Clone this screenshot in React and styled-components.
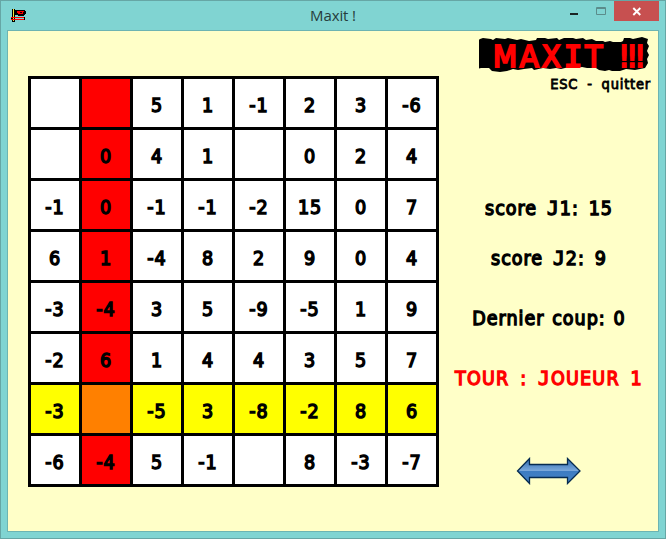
import React from "react";
import styled, { createGlobalStyle } from "styled-components";

const GlobalStyle = createGlobalStyle`
  * { box-sizing: border-box; }
  body { margin: 0; overflow: hidden; }
`;

const Window = styled.div`
  width: 666px;
  height: 539px;
  display: flex;
  flex-direction: column;
  background: #80d4d2;
  border: 1px solid #66a6a5;
  padding: 0 6px 6px;
`;

const TitleBar = styled.header`
  height: 29px;
  flex: none;
  display: grid;
  grid-template-columns: 100px 1fr 100px;
  align-items: start;
`;

const AppIcon = styled.svg`
  margin: 8px 0 0 4px;
  display: block;
`;

const Title = styled.h1`
  margin: 3px 0 0;
  text-align: center;
  font: 400 15px/22px "Open Sans", "Noto Sans", sans-serif;
  letter-spacing: -0.1px;
  color: #263c3c;
`;

const WindowButtons = styled.div`
  display: flex;
  justify-content: flex-end;
`;

const WindowButton = styled.button`
  width: ${(p) => p.$width}px;
  height: 20px;
  padding: 0;
  border: 0;
  display: block;
  background: ${(p) => p.$bg || "transparent"};
  svg { display: block; }
`;

const Client = styled.main`
  flex: 1;
  display: flex;
  background: #ffffc8;
  border: 1px solid #6db4b2;
`;

const Board = styled.div`
  margin: 45px 0 0 20px;
  width: 411px;
  height: 411px;
  flex: none;
  display: grid;
  grid-template-columns: repeat(8, 48px);
  grid-template-rows: repeat(8, 48px);
  gap: 3px;
  padding: 3px;
  background: #000;
`;

const comic = `"DejaVu Sans Condensed", "DejaVu Sans", sans-serif`;

const Cell = styled.div`
  display: flex;
  align-items: center;
  justify-content: center;
  padding-top: 5px;
  background: ${(p) => p.$bg};
  font: 400 19.5px/24px ${comic};
  font-stretch: condensed;
  letter-spacing: 0.9px;
  color: #000;
  -webkit-text-stroke: 1.4px #000;
`;

const Side = styled.aside`
  width: 204px;
  margin-left: 8px;
  display: flex;
  flex-direction: column;
  align-items: center;
`;

const Logo = styled.div`
  display: grid;
  align-self: flex-end;
  width: 172px;
  height: 36px;
  margin-top: 5px;
  > * { grid-area: 1 / 1; }
`;

const Slab = styled.span`
  font-family: "DejaVu Sans Mono", monospace;
  font-stretch: normal;
`;

const LogoText = styled.h2`
  margin: 1px 0 0 14px;
  height: 33px;
  font: 400 31px/38px ${comic};
  font-stretch: condensed;
  letter-spacing: 2.8px;
  white-space: nowrap;
  color: #f00;
  -webkit-text-stroke: 2px #f00;
`;

const Bangs = styled.span`
  margin-left: 2px;
  letter-spacing: -3.2px;
`;

const Line = styled.p`
  margin: ${(p) => p.$top}px 0 0;
  align-self: ${(p) => p.$align || "center"};
  font: 400 ${(p) => p.$size || 19.5}px/24px ${comic};
  font-stretch: condensed;
  letter-spacing: ${(p) => p.$ls || 0}px;
  word-spacing: ${(p) => p.$ws || 0}px;
  white-space: nowrap;
  color: ${(p) => p.$color || "#000"};
  -webkit-text-stroke: ${(p) => p.$stroke || 1.3}px ${(p) => p.$color || "#000"};
`;

const Arrow = styled.svg`
  display: block;
  margin-top: 66px;
`;

const rows = [
  ["", "", 5, 1, -1, 2, 3, -6],
  ["", 0, 4, 1, "", 0, 2, 4],
  [-1, 0, -1, -1, -2, 15, 0, 7],
  [6, 1, -4, 8, 2, 9, 0, 4],
  [-3, -4, 3, 5, -9, -5, 1, 9],
  [-2, 6, 1, 4, 4, 3, 5, 7],
  [-3, "", -5, 3, -8, -2, 8, 6],
  [-6, -4, 5, -1, "", 8, -3, -7],
];
const activeRow = 6;
const activeCol = 1;

function cellColor(r, c) {
  if (r === activeRow && c === activeCol) return "#ff8000";
  if (c === activeCol) return "#f00";
  if (r === activeRow) return "#ff0";
  return "#fff";
}

export default function App() {
  return (
    <>
      <GlobalStyle />
      <Window>
        <TitleBar>
          <AppIcon width="16" height="14" viewBox="0 0 16 14" shapeRendering="crispEdges">
            <path d="M1 0h3v13H1zM4 1h10v1h1v3h-1v1h-1v1H7V6H4zM0 8h14v3H0z" fill="#000" />
            <path d="M2 0h1v12H2z" fill="#f4e63c" />
            <path d="M6 2h7v1h-1v2H7V4H6zM0 8h13v1H0zM0 10h13v1H0z" fill="#f00" />
            <path d="M4 9h9v1H4z" fill="#80d4d2" />
            <path d="M9 3h2v1H9z" fill="#000" />
          </AppIcon>
          <Title>Maxit !</Title>
          <WindowButtons>
            <WindowButton $width={25} aria-label="Minimize">
              <svg width="25" height="20"><path d="M0 12h8v2H0z" fill="#1b2424" /></svg>
            </WindowButton>
            <WindowButton $width={19} aria-label="Maximize">
              <svg width="19" height="20"><path d="M1.5 6.5h9v7h-9zM1.5 7.5h9" fill="none" stroke="#5b8c8b" /></svg>
            </WindowButton>
            <WindowButton $width={45} $bg="#c75050" aria-label="Close">
              <svg width="45" height="20"><path d="M19.3 7l7 7M26.3 7l-7 7" stroke="#fff" strokeWidth="1.9" /></svg>
            </WindowButton>
          </WindowButtons>
        </TitleBar>
        <Client>
          <Board>
            {rows.map((row, r) =>
              row.map((value, c) => (
                <Cell key={`${r}-${c}`} $bg={cellColor(r, c)}>{value}</Cell>
              ))
            )}
          </Board>
          <Side>
            <Logo>
              <svg width="172" height="36" viewBox="0 0 172 36">
                <path
                  d="M1 3l3-1 8 1 2 1 3-2 9 1 3-1 9 2 4-1 8 2 7-1 1-2 8 0 3 1 9-1 2 2 5-2 9 0 3 1 7-1 3 2 6-1 4 2 7 0 2 1 5-1 3 1 8 0 2-1 1-3 6 0 3 1 9-2 3 1 3 1-1 4 2 3-2 5 2 4-2 4 1 4-3 5-5 1-5 1-9-1-6 2-8 0-3-1-4 1-6-1-3-2-9 0-5-1-5 1-8-1-8 2-5-1-6 1-7-1-9 2-2-2-8 1-6 1-5-1-6 2-7 1-8-1-3-3-8 0-4 1-5-1-3-2 1-7-1-4 1-5-1-4z"
                  fill="#000"
                />
              </svg>
              <LogoText>MAX<Slab>I</Slab>T <Bangs>!!!</Bangs></LogoText>
            </Logo>
            <Line $top={0} $align="flex-end" $size={14.5} $stroke={0.8} $ls={0.8} $ws={4}>ESC - quitter</Line>
            <Line $top={101} $ls={1} $ws={3.3}>score <Slab>J</Slab>1: 15</Line>
            <Line $top={26} $ls={1} $ws={3.3}>score <Slab>J</Slab>2: 9</Line>
            <Line $top={36} $ls={1} $ws={1.2}>Dernier coup: 0</Line>
            <Line $top={36} $ls={1.2} $ws={4} $color="#f00">TOUR : <Slab>J</Slab>OUEUR 1</Line>
            <Arrow width="66" height="28" viewBox="0 0 66 28">
              <defs>
                <linearGradient id="arrowFill" x1="0" y1="0" x2="0" y2="1">
                  <stop offset="0" stopColor="#2d69b0" />
                  <stop offset="0.48" stopColor="#79a7da" />
                  <stop offset="0.52" stopColor="#3d7cc2" />
                  <stop offset="1" stopColor="#4381c5" />
                </linearGradient>
              </defs>
              <path
                d="M1.5 14L13.5 1.5V7.5H51.5V1.5L64 14 51.5 26.5V20.5H13.5V26.5z"
                fill="url(#arrowFill)" stroke="#062b50" strokeWidth="1.3"
              />
            </Arrow>
          </Side>
        </Client>
      </Window>
    </>
  );
}
